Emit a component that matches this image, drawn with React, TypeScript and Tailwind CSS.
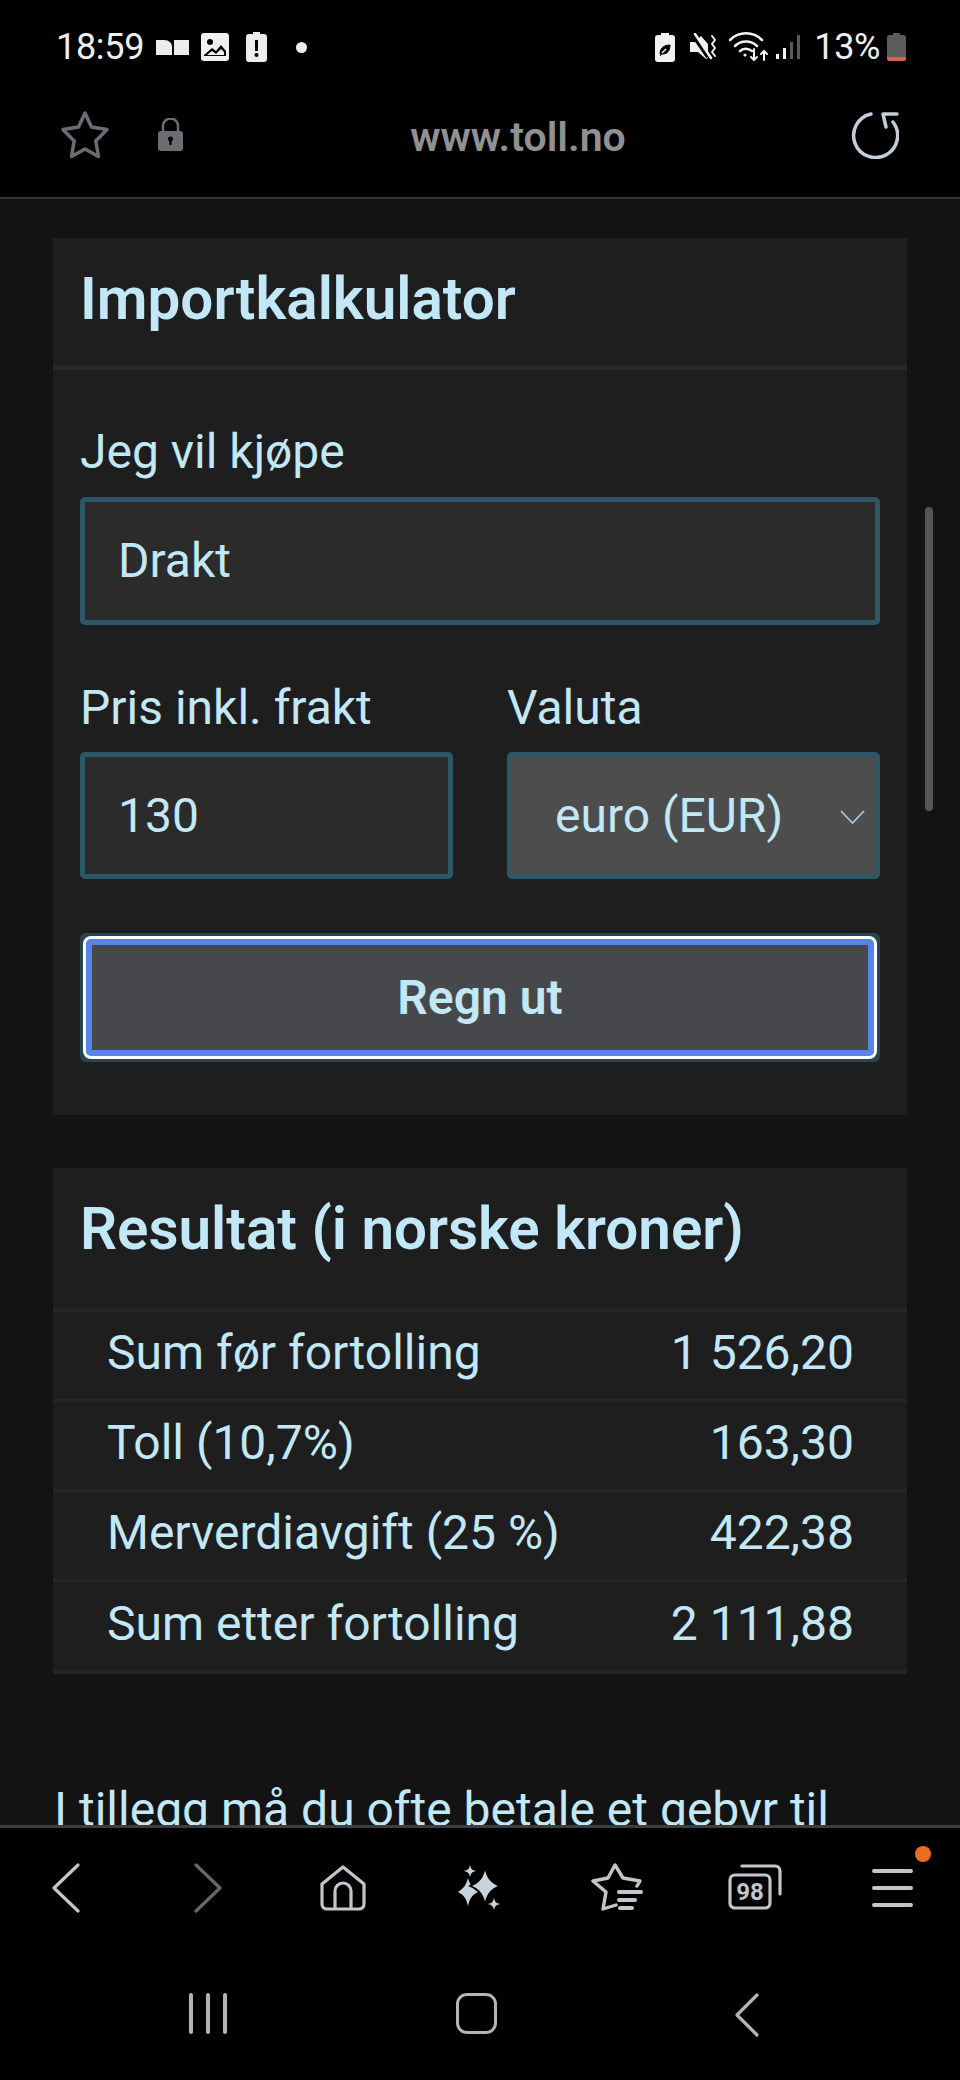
// Importkalkulator on www.toll.no, Samsung Internet dark mode

const font = "font-['Roboto','Liberation_Sans',sans-serif]";

const rows = [
  { label: "Sum før fortolling", value: "1 526,20", height: "h-[87px]" },
  { label: "Toll (10,7%)", value: "163,30", height: "h-[87px]" },
  { label: "Merverdiavgift (25 %)", value: "422,38", height: "h-[87px]" },
  { label: "Sum etter fortolling", value: "2 111,88", height: "h-[88px]" },
];

function StatusLeft() {
  return (
    <div className="flex items-center">
      <span className="ml-[56px] w-[86px] text-[36px] leading-[40px] tracking-[-0.3px] text-[#f0f0f0]">18:59</span>
      <svg className="ml-[14px]" width="33" height="16" viewBox="0 0 33 16" fill="#ececec">
        <path d="M0 1h8c5 0 8 3 8 7v8H0z" />
        <path d="M18 1h15v15H18z" />
      </svg>
      <svg className="ml-[12px]" width="28" height="28" viewBox="0 0 28 28">
        <rect width="28" height="28" rx="3" fill="#f0f0f0" />
        <circle cx="9" cy="9" r="3" fill="#000" />
        <path d="M3 22l8-7 4 3 5-6 5 6v5H3z" fill="#000" />
        <path d="M6 22l5-4 4 3 5-5 3 3v3z" fill="#f0f0f0" />
      </svg>
      <svg className="ml-[17px]" width="21" height="30" viewBox="0 0 21 30">
        <path d="M7 0h7v2h4a3 3 0 0 1 3 3v22a3 3 0 0 1-3 3H3a3 3 0 0 1-3-3V5a3 3 0 0 1 3-3h4z" fill="#ececec" />
        <rect x="9" y="8" width="3" height="11" fill="#000" />
        <circle cx="10.5" cy="23" r="2" fill="#000" />
      </svg>
      <span className="ml-[29px] h-[11px] w-[11px] rounded-full bg-[#ececec]" />
    </div>
  );
}

function StatusRight() {
  return (
    <div className="ml-auto mr-[54px] flex items-center">
      <svg width="20" height="29" viewBox="0 0 20 29">
        <path d="M6 0h8v2h3a3 3 0 0 1 3 3v21a3 3 0 0 1-3 3H3a3 3 0 0 1-3-3V5a3 3 0 0 1 3-3h3z" fill="#f2f2f2" />
        <path d="M5 21c0-6 4-9 10-9 0 6-3 9-7 9zM5 23l5-6" fill="#000" stroke="#000" strokeWidth="1" />
        <path d="M7 20l4-4" stroke="#f2f2f2" strokeWidth="1.5" />
      </svg>
      <svg className="ml-[15px]" width="27" height="28" viewBox="0 0 27 28" fill="none">
        <path d="M0 9h5l6-6 7 8v14l-2 1L8 19H0z" fill="#f2f2f2" />
        <path d="M3 2l15 22" stroke="#000" strokeWidth="4" />
        <path d="M5 1l16 24" stroke="#f2f2f2" strokeWidth="2.5" strokeLinecap="round" />
        <path d="M22 3l3 4-3 4 3 4-3 4 3 4" stroke="#f2f2f2" strokeWidth="2" strokeLinecap="round" strokeLinejoin="round" />
      </svg>
      <svg className="ml-[12px]" width="39" height="30" viewBox="0 0 39 30" fill="none" stroke="#f2f2f2" strokeLinecap="round">
        <path d="M1 8c9-9 23-9 32 0" strokeWidth="2.5" />
        <path d="M6 14c6-6 16-6 22 0" strokeWidth="2.5" />
        <path d="M11 19c3-3 8-3 12 0" strokeWidth="2.5" />
        <circle cx="16" cy="23" r="1.6" fill="#f2f2f2" stroke="none" />
        <path d="M25 17v11m-3-3l3 3 3-3" strokeWidth="2" />
        <path d="M35 28V19m-3 3l3-3 3 3" strokeWidth="2" />
      </svg>
      <svg className="ml-[8px]" width="24" height="26" viewBox="0 0 24 26">
        <rect x="0" y="20" width="3" height="5" fill="#f2f2f2" />
        <rect x="7" y="14" width="3" height="11" fill="#f2f2f2" />
        <rect x="14" y="8" width="3" height="17" fill="#5a5a5a" />
        <rect x="21" y="1" width="3" height="24" fill="#5a5a5a" />
      </svg>
      <span className="ml-[14px] text-[36px] leading-[40px] tracking-[-0.4px] text-[#f0f0f0]">13%</span>
      <svg className="ml-[7px]" width="19" height="28" viewBox="0 0 19 28">
        <path d="M6 0h7v2h3a3 3 0 0 1 3 3v20a3 3 0 0 1-3 3H3a3 3 0 0 1-3-3V5a3 3 0 0 1 3-3h3z" fill="#5c5c5c" />
        <path d="M0 24h19v1a3 3 0 0 1-3 3H3a3 3 0 0 1-3-3z" fill="#e0623a" />
      </svg>
    </div>
  );
}

function Toolbar() {
  return (
    <div className="flex h-[127px] items-center">
      <svg className="ml-[60px] mt-[2px]" width="50" height="50" viewBox="0 0 50 50" fill="none">
        <path
          d="M25 3l6.500 14 15.500 2.500-11.200 11.500 2.700 15.500L25 39l-13.500 7.500 2.700-15.500L3 19.500l15.500-2.500z"
          stroke="#6a6d72"
          strokeWidth="3.500"
          strokeLinejoin="round"
        />
      </svg>
      <svg className="ml-[48px] mt-[2px]" width="25" height="33" viewBox="0 0 25 33">
        <path d="M5 14V8a7.500 7.500 0 0 1 15 0v6" fill="none" stroke="#6a6d72" strokeWidth="2.500" />
        <rect y="13" width="25" height="20" rx="3" fill="#6a6d72" />
        <circle cx="12.500" cy="21" r="2.500" fill="#000" />
        <rect x="11.300" y="21" width="2.400" height="6" fill="#000" />
      </svg>
      <span className="ml-[226px] mt-[7px] w-[218px] whitespace-nowrap text-center text-[41px] font-semibold leading-[44px] text-[#919191]">
        www.toll.no
      </span>
      <svg className="ml-[224px] mt-[2px]" width="48" height="48" viewBox="0 0 48 48" fill="none" stroke="#c3ced8" strokeWidth="3.500" strokeLinecap="round" strokeLinejoin="round">
        <path d="M20 3A22 22 0 1 0 42 11" />
        <path d="M46 3H32l3 13" />
      </svg>
    </div>
  );
}

function ImportForm() {
  return (
    <section className="bg-[#1e1e1e]">
      <h2 className="flex h-[127px] items-center px-[27px] pb-[6px] text-[58.400px] font-semibold leading-[70px]">
        Importkalkulator
      </h2>
      <div className="h-[5px] bg-[#262829]" />
      <div className="px-[27px] pb-[53px] pt-[51px]">
        <label className="block h-[76px] leading-[62px]">Jeg vil kjøpe</label>
        <div className="flex h-[128px] items-center rounded-[5px] border-[5px] border-[#2d5766] bg-[#2b2b2b] px-[33px]">
          Drakt
        </div>
        <div className="mt-[60px] flex gap-[54px]">
          <div className="w-[373px]">
            <label className="block h-[67px] leading-[45px]">Pris inkl. frakt</label>
            <div className="flex h-[127px] items-center rounded-[5px] border-[5px] border-[#2d5766] bg-[#2b2b2b] px-[33px]">
              130
            </div>
          </div>
          <div className="w-[373px]">
            <label className="block h-[67px] leading-[45px]">Valuta</label>
            <div className="flex h-[127px] items-center rounded-[5px] border-[5px] border-[#2d5766] bg-[#4d4d4d] pl-[43px] pr-[10px]">
              euro (EUR)
              <svg className="ml-auto mt-[2px]" width="25" height="16" viewBox="0 0 25 16" fill="none" stroke="#a9ccdb" strokeWidth="1.800">
                <path d="M1 2l11.500 12L24 2" />
              </svg>
            </div>
          </div>
        </div>
        <div className="mt-[54px] rounded-[6px] bg-[#264650] p-[3px]">
          <button className="flex h-[123px] w-full items-center justify-center rounded-[8px] border-[3px] border-white bg-[#47484b] text-[48px] font-semibold leading-[52px] text-[#c2e7f7] shadow-[inset_0_0_0_6px_#5585e8]">
            Regn ut
          </button>
        </div>
      </div>
    </section>
  );
}

function Results() {
  return (
    <section className="mt-[53px] bg-[#1e1e1e]">
      <h2 className="flex h-[141px] items-center px-[27px] pb-[20px] text-[58.400px] font-semibold leading-[70px]">
        Resultat (i norske kroner)
      </h2>
      {rows.map((row) => (
        <div key={row.label}>
          <div className="h-[3px] bg-[#262626]" />
          <div className={`flex items-center justify-between pb-[5px] pl-[54px] pr-[53px] ${row.height}`}>
            <span>{row.label}</span>
            <span>{row.value}</span>
          </div>
        </div>
      ))}
      <div className="h-[4px] bg-[#262626]" />
    </section>
  );
}

function BottomNav() {
  return (
    <div className="relative flex h-[115px] items-start border-t-[3px] border-[#3d3d3d] bg-black pt-[35px]">
      <svg className="ml-[52px]" width="28" height="50" viewBox="0 0 28 50" fill="none" stroke="#c2c6cb" strokeWidth="3.200" strokeLinecap="round" strokeLinejoin="round">
        <path d="M26 2L2 25l24 23" />
      </svg>
      <svg className="ml-[114px]" width="28" height="50" viewBox="0 0 28 50" fill="none" stroke="#686868" strokeWidth="3.200" strokeLinecap="round" strokeLinejoin="round">
        <path d="M2 2l24 23L2 48" />
      </svg>
      <svg className="ml-[98px] mt-[2px]" width="46" height="46" viewBox="0 0 46 46" fill="none" stroke="#c2c6cb" strokeWidth="3.200" strokeLinejoin="round">
        <path d="M2 19L23 2l21 17v20a5 5 0 0 1-5 5H7a5 5 0 0 1-5-5z" />
        <path d="M15 44V26a8 8 0 0 1 16 0v18" />
      </svg>
      <svg className="ml-[92px] mt-[1px]" width="44" height="48" viewBox="0 0 44 48" fill="#c7d3dd">
        <path d="M12 1c1 4 2 5 6 6-4 1-5 2-6 6-1-4-2-5-6-6 4-1 5-2 6-6z" />
        <path d="M36 34c1 4 2 5 6 6-4 1-5 2-6 6-1-4-2-5-6-6 4-1 5-2 6-6z" />
        <path d="M10 14c2 7 4 10 10 14-6 3-8 6-10 14-2-8-4-11-10-14 6-4 8-7 10-14z" />
        <path d="M27 3c2 10 5 15 15 19-10 4-13 9-15 19-2-10-5-15-15-19 10-4 13-9 15-19z" stroke="#000" strokeWidth="1.500" />
      </svg>
      <svg className="ml-[89px]" width="52" height="50" viewBox="0 0 52 50" fill="none" stroke="#c2c6cb" strokeWidth="3.400" strokeLinecap="round" strokeLinejoin="round">
        <path d="M25 42l-13 4 3-17L2 18l15-3 7-13 8 13 17 3-3 5" />
        <path d="M28 29h22M28 37h16M29 45h12" strokeWidth="4" />
      </svg>
      <svg className="ml-[85px] mt-[1px]" width="54" height="46" viewBox="0 0 54 46" fill="none" stroke="#c2c6cb" strokeWidth="3.200">
        <rect x="2" y="11" width="40" height="33" rx="5" />
        <path d="M14 2h33a5 5 0 0 1 5 5v23" strokeLinecap="round" />
        <text x="22" y="36" textAnchor="middle" fontSize="24" fontWeight="700" fill="#c2c6cb" stroke="none">
          98
        </text>
      </svg>
      <svg className="ml-[90px] mt-[5px]" width="41" height="40" viewBox="0 0 41 40" fill="none" stroke="#c2c6cb" strokeWidth="4" strokeLinecap="round">
        <path d="M2 3h37M2 20h37M2 37h37" />
      </svg>
      <span className="absolute left-[915px] top-[18px] h-[16px] w-[16px] rounded-full bg-[#ee6c1f]" />
    </div>
  );
}

function GestureBar() {
  return (
    <div className="flex h-[140px] items-start bg-black pt-[53px]">
      <div className="ml-[189px] flex h-[41px] gap-[13px]">
        <span className="w-[4px] rounded-full bg-[#b4b4b4]" />
        <span className="w-[4px] rounded-full bg-[#b4b4b4]" />
        <span className="w-[4px] rounded-full bg-[#b4b4b4]" />
      </div>
      <div className="ml-[229px] h-[41px] w-[41px] rounded-[11px] border-[3.500px] border-[#b4b4b4]" />
      <svg className="ml-[238px]" width="24" height="44" viewBox="0 0 24 44" fill="none" stroke="#b4b4b4" strokeWidth="3.200" strokeLinecap="round" strokeLinejoin="round">
        <path d="M22 2L2 22l20 20" />
      </svg>
    </div>
  );
}

export default function App() {
  return (
    <div className={`flex h-[2080px] w-[960px] flex-col overflow-hidden bg-black ${font}`}>
      <div className="flex h-[70px] items-center bg-black pt-[24px]">
        <StatusLeft />
        <StatusRight />
      </div>
      <Toolbar />
      <div className="h-[2px] bg-[#333]" />
      <main className="relative flex-1 overflow-hidden bg-[#131313] px-[53px] pt-[39px] text-[48px] leading-[54px] text-[#c2e7f7]">
        <ImportForm />
        <Results />
        <p className="mt-[109px] whitespace-nowrap pl-[1px]">I tillegg må du ofte betale et gebyr til</p>
        <div className="absolute right-[27px] top-[308px] h-[304px] w-[8px] rounded-full bg-[#565656]" />
      </main>
      <BottomNav />
      <GestureBar />
    </div>
  );
}
